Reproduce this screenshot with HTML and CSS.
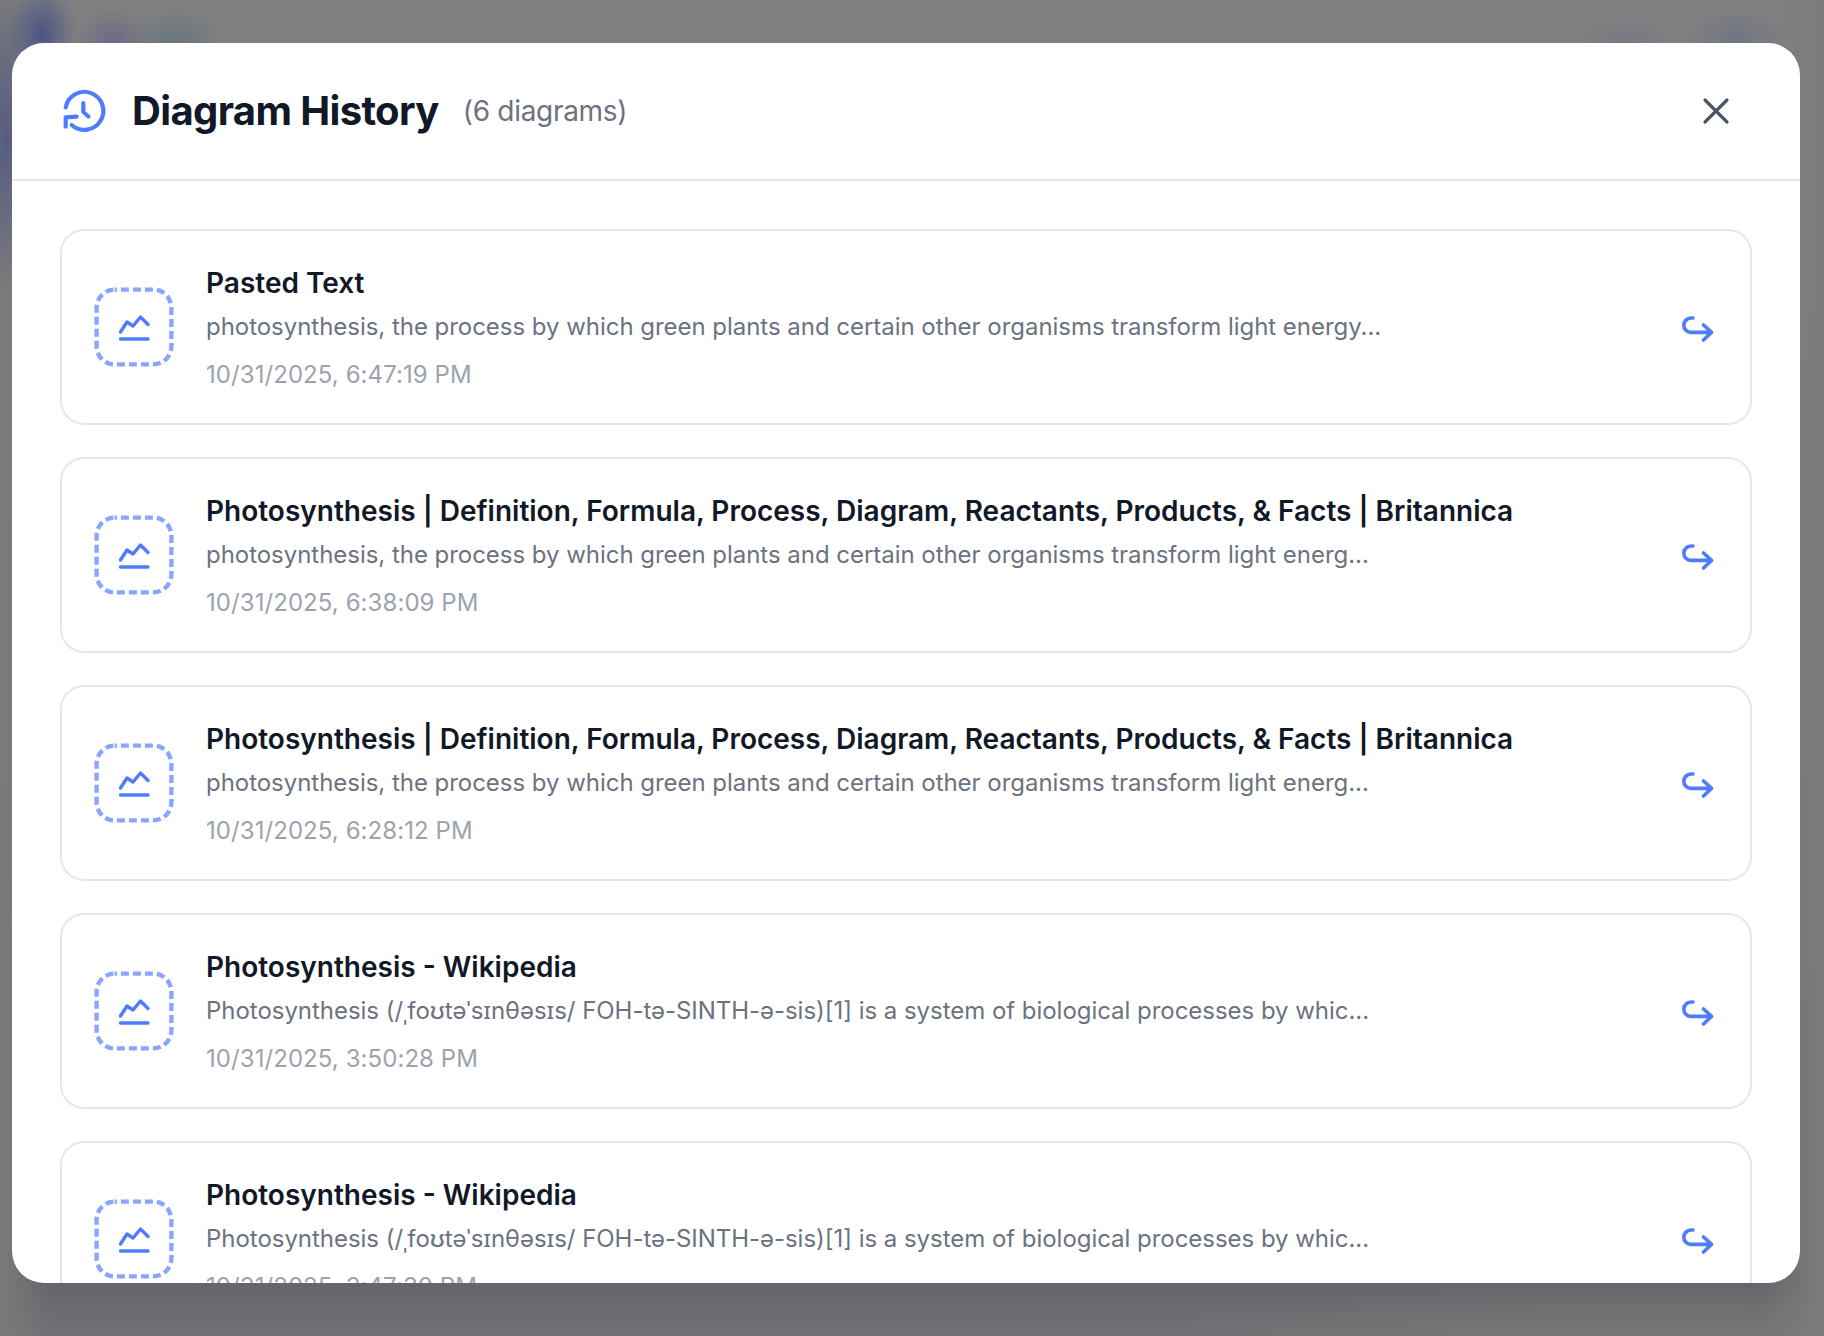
FILE: index.html
```html
<!DOCTYPE html>
<html lang="en">
<head>
<meta charset="utf-8">
<title>Diagram History</title>
<link rel="stylesheet" href="styles.css">
</head>
<body>
<svg class="sprites" width="0" height="0" aria-hidden="true">
  <symbol id="thumb" viewBox="0 0 80 80">
    <rect class="thumb-frame" x="2.6" y="2.6" width="74.8" height="74.8" rx="18"/>
    <path class="thumb-chart" d="M26.5 45 L33 35 L39 39 L46.5 30 L54 37.5"/>
    <path class="thumb-chart" d="M26.5 52 H54"/>
  </symbol>
  <symbol id="go" viewBox="0 0 40 40">
    <path d="M15 11 H13 A7.2 7.2 0 0 0 13 25.4 H33.5"/>
    <path d="M25.5 18 L33.5 25.4 L25.5 33"/>
  </symbol>
</svg>
<div class="overlay">
  <div class="modal">
    <header class="modal-header">
      <svg class="history-icon" viewBox="0 0 48 48">
        <path d="M5.7 20.3 A19 19 0 1 1 11.7 38"/>
        <path d="M16.7 29.7 L5.7 30.3 V39.7"/>
        <path d="M23.3 16 V25 L28.5 29.5"/>
      </svg>
      <h1 class="modal-title">Diagram History</h1>
      <span class="modal-count">(6 diagrams)</span>
      <svg class="close-icon" viewBox="0 0 28 28">
        <path d="M3 3 L25 25 M25 3 L3 25"/>
      </svg>
    </header>
    <div class="modal-body">
      <article class="card">
        <svg class="thumb"><use href="#thumb"/></svg>
        <div class="card-text">
          <h2 class="card-title">Pasted Text</h2>
          <p class="card-desc">photosynthesis, the process by which green plants and certain other organisms transform light energy...</p>
          <p class="card-date">10/31/2025, 6:47:19 PM</p>
        </div>
        <svg class="go-icon"><use href="#go"/></svg>
      </article>
      <article class="card">
        <svg class="thumb"><use href="#thumb"/></svg>
        <div class="card-text">
          <h2 class="card-title">Photosynthesis | Definition, Formula, Process, Diagram, Reactants, Products, &amp; Facts | Britannica</h2>
          <p class="card-desc">photosynthesis, the process by which green plants and certain other organisms transform light energ...</p>
          <p class="card-date">10/31/2025, 6:38:09 PM</p>
        </div>
        <svg class="go-icon"><use href="#go"/></svg>
      </article>
      <article class="card">
        <svg class="thumb"><use href="#thumb"/></svg>
        <div class="card-text">
          <h2 class="card-title">Photosynthesis | Definition, Formula, Process, Diagram, Reactants, Products, &amp; Facts | Britannica</h2>
          <p class="card-desc">photosynthesis, the process by which green plants and certain other organisms transform light energ...</p>
          <p class="card-date">10/31/2025, 6:28:12 PM</p>
        </div>
        <svg class="go-icon"><use href="#go"/></svg>
      </article>
      <article class="card">
        <svg class="thumb"><use href="#thumb"/></svg>
        <div class="card-text">
          <h2 class="card-title">Photosynthesis - Wikipedia</h2>
          <p class="card-desc">Photosynthesis (/ˌfoʊtəˈsɪnθəsɪs/ FOH-tə-SINTH-ə-sis)[1] is a system of biological processes by whic...</p>
          <p class="card-date">10/31/2025, 3:50:28 PM</p>
        </div>
        <svg class="go-icon"><use href="#go"/></svg>
      </article>
      <article class="card">
        <svg class="thumb"><use href="#thumb"/></svg>
        <div class="card-text">
          <h2 class="card-title">Photosynthesis - Wikipedia</h2>
          <p class="card-desc">Photosynthesis (/ˌfoʊtəˈsɪnθəsɪs/ FOH-tə-SINTH-ə-sis)[1] is a system of biological processes by whic...</p>
          <p class="card-date">10/31/2025, 3:47:30 PM</p>
        </div>
        <svg class="go-icon"><use href="#go"/></svg>
      </article>
    </div>
  </div>
</div>
</body>
</html>
```
FILE: styles.css
```css
* { box-sizing: border-box; }
html, body { margin: 0; height: 100%; }
body {
  font-family: Inter, "Noto Sans", sans-serif;
  overflow: hidden;
}
.sprites { position: absolute; }
.overlay {
  height: 1336px;
  padding: 43px 24px 53px 12px;
  display: flex;
  background:
    radial-gradient(ellipse 35px 50px at 42px 34px, rgba(58,70,135,.75), rgba(58,70,135,0) 100%),
    radial-gradient(ellipse 40px 35px at 112px 42px, rgba(100,85,140,.55), rgba(100,85,140,0) 100%),
    radial-gradient(ellipse 50px 35px at 175px 42px, rgba(85,110,125,.55), rgba(85,110,125,0) 100%),
    radial-gradient(ellipse 30px 150px at 6px 140px, rgba(70,78,130,.7), rgba(70,78,130,0) 100%),
    radial-gradient(ellipse 50px 25px at 1625px 40px, rgba(105,110,135,.35), rgba(105,110,135,0) 100%),
    radial-gradient(ellipse 50px 30px at 1735px 38px, rgba(100,105,135,.5), rgba(100,105,135,0) 100%),
    linear-gradient(90deg, #7a7a7a 0, rgba(122,122,122,0) 50px, rgba(122,122,122,0) 1760px, #7c7c7c 1824px),
    radial-gradient(ellipse 500px 60px at 1640px 1345px, rgba(122,120,116,.9), rgba(122,120,116,0) 100%),
    linear-gradient(180deg, #808080 0, #808080 250px, #767676 700px, #64666a 1283px, #717276 1336px);
}
.modal {
  flex: 1;
  background: #fff;
  border-radius: 32px;
  overflow: hidden;
  display: flex;
  flex-direction: column;
}
.modal-header {
  height: 138px;
  flex: none;
  display: flex;
  align-items: center;
  padding: 0 48px;
  border-bottom: 2px solid #e5e7eb;
}
.history-icon {
  width: 48px;
  height: 48px;
  flex: none;
  fill: none;
  stroke: #4f7cff;
  stroke-width: 4.2;
  stroke-linecap: round;
  stroke-linejoin: round;
  margin-right: 24px;
}
.modal-title {
  margin: 0;
  font-size: 40px;
  line-height: 48px;
  font-weight: 700;
  letter-spacing: -0.62px;
  color: #111827;
}
.modal-count {
  margin-left: 24px;
  font-size: 28px;
  letter-spacing: -0.3px;
  color: #6b7280;
}
.close-icon {
  width: 28px;
  height: 28px;
  margin-left: auto;
  margin-right: 22px;
  fill: none;
  stroke: #4b5563;
  stroke-width: 3.2;
  stroke-linecap: round;
}
.modal-body {
  flex: 1;
  min-height: 0;
  overflow: hidden;
  padding: 48px;
  display: flex;
  flex-direction: column;
  gap: 32px;
}
.card {
  flex: none;
  height: 196px;
  border: 2px solid #e5e7eb;
  border-radius: 24px;
  padding: 0 32px;
  display: flex;
  align-items: center;
}
.thumb {
  width: 80px;
  height: 80px;
  flex: none;
  margin-right: 32px;
}
.thumb-frame {
  fill: none;
  stroke: #8aa5ff;
  stroke-width: 4.4;
  stroke-dasharray: 8 4;
  stroke-dashoffset: 5.7;
}
.thumb-chart {
  fill: none;
  stroke: #4f7cff;
  stroke-width: 3.4;
  stroke-linecap: round;
  stroke-linejoin: round;
}
.card-text { flex: 1; min-width: 0; padding-top: 2px; }
.card-title {
  margin: 0 0 10px;
  font-size: 28px;
  line-height: 36px;
  font-weight: 600;
  color: #111827;
}
.card-desc {
  margin: 0 0 16px;
  font-size: 24px;
  line-height: 32px;
  letter-spacing: -0.034px;
  color: #6b7280;
}
.card-date {
  margin: 0;
  font-size: 24px;
  line-height: 32px;
  letter-spacing: 0.07px;
  color: #9ca3af;
}
.go-icon {
  width: 40px;
  height: 40px;
  flex: none;
  fill: none;
  stroke: #4f7cff;
  stroke-width: 3.6;
  stroke-linecap: round;
  stroke-linejoin: round;
}
```
